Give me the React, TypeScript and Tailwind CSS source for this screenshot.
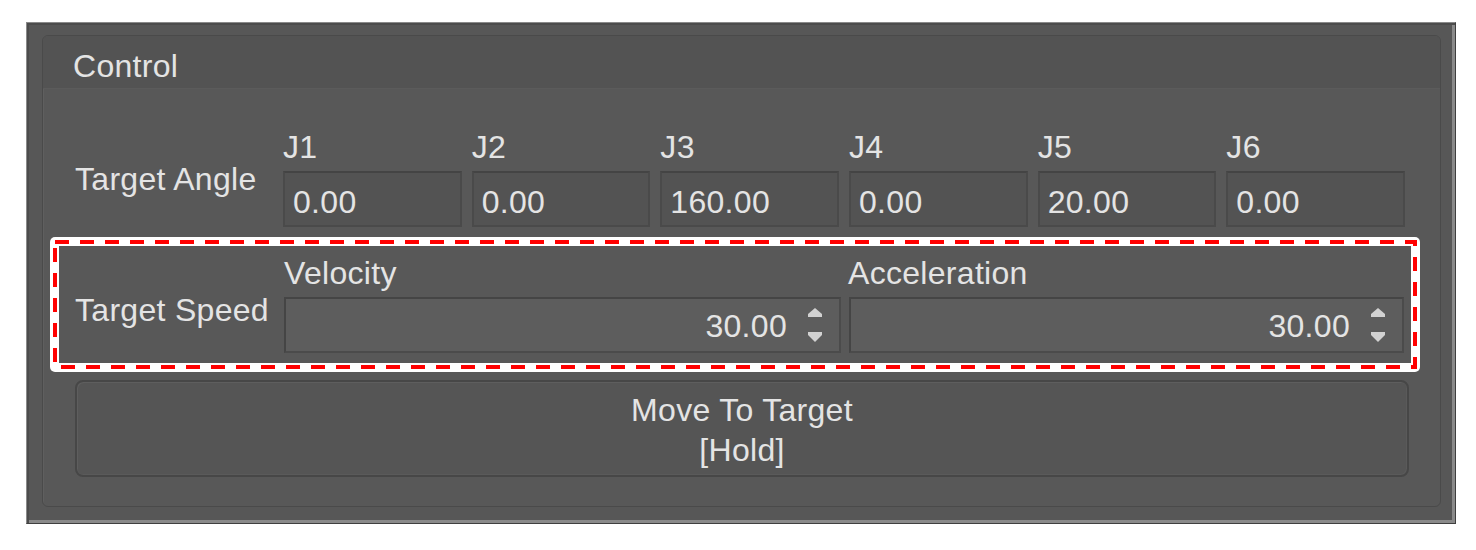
import React from "react";

const joints = [
  { j: "J1", v: "0.00" },
  { j: "J2", v: "0.00" },
  { j: "J3", v: "160.00" },
  { j: "J4", v: "0.00" },
  { j: "J5", v: "20.00" },
  { j: "J6", v: "0.00" },
];

const T = "text-[32px] leading-[36px] tracking-[0.3px] text-[#e4e4e4]";

function Spin() {
  return (
    <div className="flex flex-col items-center gap-[14px] ml-[20px] mr-[16px]">
      <svg width="16" height="10" viewBox="0 0 16 10">
        <polygon points="8,0 15,6 15,9 1,9 1,6" fill="#d2d2d2" />
      </svg>
      <svg width="16" height="10" viewBox="0 0 16 10">
        <polygon points="1,0 15,0 15,3 8,10 1,3" fill="#d2d2d2" />
      </svg>
    </div>
  );
}

function SpinBox({ value }: { value: string }) {
  return (
    <div className="h-[56px] bg-[#5d5d5d] border-2 border-[#4b4b4b] border-t-[#454545] border-l-[#454545] flex items-center justify-end">
      <span className={T + " pt-[2px]"}>{value}</span>
      <Spin />
    </div>
  );
}

export default function App() {
  return (
    <div className="w-[1476px] h-[550px] bg-white pt-[22px] pl-[26px] font-['Liberation_Sans',Arial,sans-serif]">
      <div className="w-[1430px] h-[502px] border border-[#8a8a8a] border-r-[#3f3f3f] border-b-[#3f3f3f] bg-[#575757] pt-[12px] pl-[15px] pr-[14px] shadow-[inset_2px_2px_0_#4c4c4c,inset_-3px_-3px_0_#8a8a8a]">
        <div className="h-[472px] rounded-[6px] border border-[#4a4a4a] bg-[#585858] overflow-hidden flex flex-col shadow-[inset_1px_1px_0_#5f5f5f]">
          <div className="h-[53px] shrink-0 bg-[#535353] border-b border-[#5b5b5b] pl-[30px] flex items-center pt-[8px]">
            <span className={T}>Control</span>
          </div>
          <div className="flex flex-col pt-[40px]">
            {/* Target Angle row */}
            <div className="flex pl-[32px]">
              <div className="w-[208px] flex items-center pt-[2px]">
                <span className={T}>Target Angle</span>
              </div>
              <div className="w-[1122px] grid grid-cols-6 gap-x-[10px]">
                {joints.map((x) => (
                  <div key={x.j} className="flex flex-col">
                    <div className={"h-[36px] " + T}>{x.j}</div>
                    <div className="mt-[6px] h-[56px] bg-[#535353] border-2 border-[#4a4a4a] border-t-[#444444] flex items-center pl-[8px] pt-[6px]">
                      <span className={T}>{x.v}</span>
                    </div>
                  </div>
                ))}
              </div>
            </div>

            {/* Highlighted Target Speed row */}
            <div className="relative mt-[10px] ml-[7px] w-[1370px] h-[135px] rounded-[5px] bg-white p-[9px]">
              <div className="h-full bg-[#585858] flex pt-[9px] pl-[16px] pr-[7px]">
                <div className="w-[209px] flex items-center pt-[12px] pb-[10px]">
                  <span className={T}>Target Speed</span>
                </div>
                <div className="w-[1120px] grid grid-cols-[557px_555px] gap-x-[8px]">
                  <div className="flex flex-col">
                    <div className={"h-[36px] " + T}>Velocity</div>
                    <div className="mt-[6px]">
                      <SpinBox value="30.00" />
                    </div>
                  </div>
                  <div className="flex flex-col">
                    <div className={"h-[36px] -ml-[1px] " + T}>Acceleration</div>
                    <div className="mt-[6px]">
                      <SpinBox value="30.00" />
                    </div>
                  </div>
                </div>
              </div>
              <svg className="absolute inset-0 pointer-events-none" width="1370" height="135" viewBox="0 0 1370 135">
                <rect x="5" y="5" width="1360" height="125" fill="none" stroke="#ff0000" strokeWidth="4" strokeDasharray="14 11" />
              </svg>
            </div>

            {/* Button */}
            <div className="mt-[8px] ml-[32px] w-[1334px] h-[97px] rounded-[8px] border-2 border-[#474747] bg-[#555555] shadow-[inset_1px_1px_0_#5e5e5e,inset_-1px_-1px_0_#5a5a5a] flex flex-col items-center justify-center pt-[3px]">
              <span className="text-[32px] leading-[40px] tracking-[0.3px] text-[#e4e4e4]">Move To Target</span>
              <span className="text-[32px] leading-[40px] tracking-[0.3px] text-[#e4e4e4]">[Hold]</span>
            </div>
          </div>
        </div>
      </div>
    </div>
  );
}
